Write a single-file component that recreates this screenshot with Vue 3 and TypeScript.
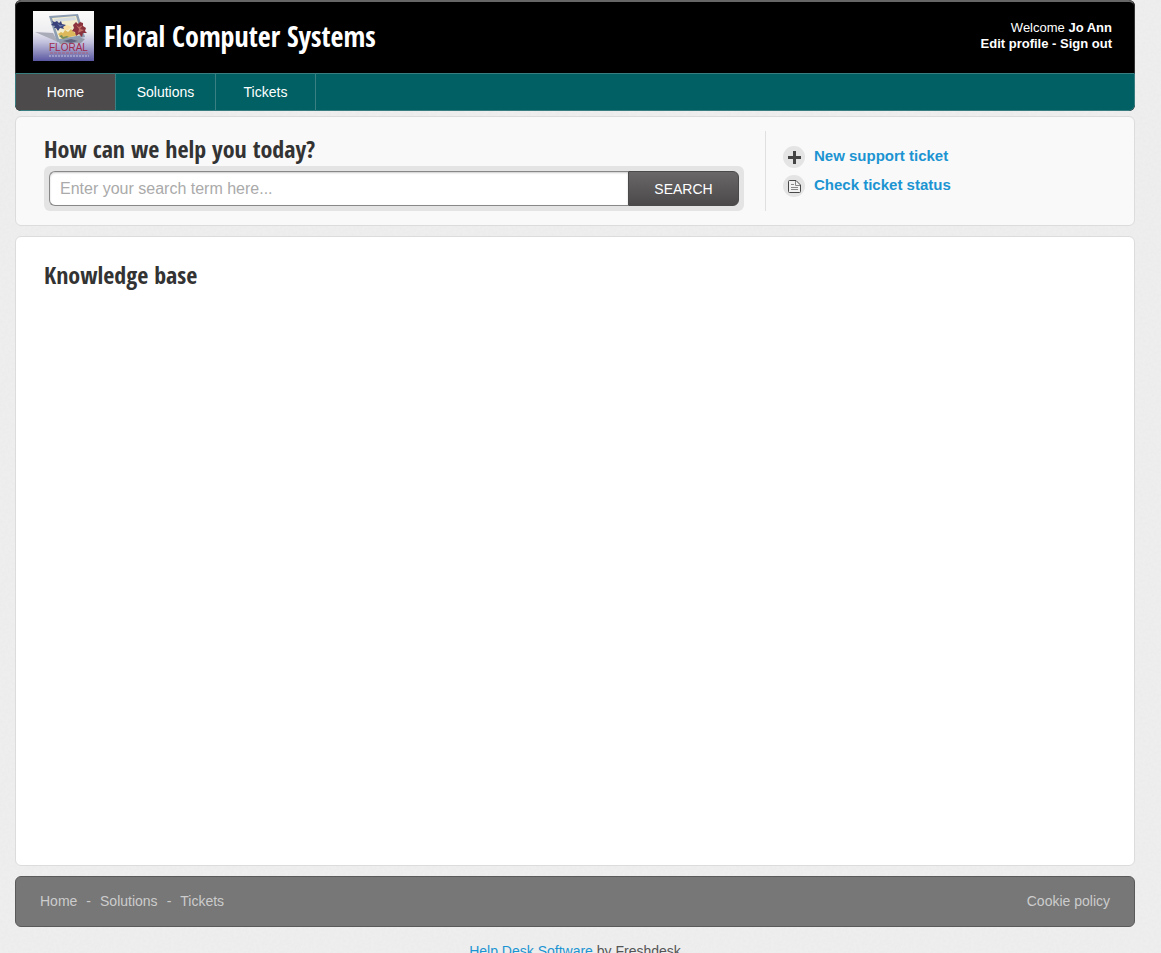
<script setup lang="ts">
import { ref } from 'vue'

interface NavItem {
  label: string
  href: string
}

const navItems: NavItem[] = [
  { label: 'Home', href: '#home' },
  { label: 'Solutions', href: '#solutions' },
  { label: 'Tickets', href: '#tickets' },
]
const active = ref('Home')
const term = ref('')
</script>

<template>
  <div class="page">
    <header class="header">
      <div class="banner">
        <a class="brand" href="#home">
          <svg class="logo" viewBox="0 0 61 50" aria-hidden="true">
            <defs>
              <linearGradient id="sky" x1="0" y1="0" x2="0" y2="1">
                <stop offset="0" stop-color="#fbfbfa" />
                <stop offset="0.4" stop-color="#eeeef1" />
                <stop offset="0.62" stop-color="#c3c2de" />
                <stop offset="0.85" stop-color="#8583b8" />
                <stop offset="1" stop-color="#5a58a2" />
              </linearGradient>
            </defs>
            <rect width="61" height="50" fill="url(#sky)" />
            <path d="M2 21L20 22L25 31Z" fill="#a9abb8" />
            <path d="M25 30L45 26L52 28L48 32L27 33Z" fill="#9299a9" />
            <path d="M16 5L45 3L52 26L24 31Z" fill="#8d9db2" />
            <path d="M19 7L43 5L49 24L26 28Z" fill="#f2edcf" />
            <path d="M21 8L42 6L43 9L22 11Z" fill="#d4dbe1" />
            <path d="M25 23L28 21L30 22L32 19L35 21L38 18L41 21L45 24L29 28Z" fill="#deb95c" />
            <path d="M29 16L34 14L39 16L35 19L31 19Z" fill="#f9dfa2" />
            <path d="M19 10L22 11L24 10L26 12L28 10L29 13L33 14L30 16L31 18L27 17L25 20L23 17L21 17L22 15L18 14L20 12Z" fill="#39427b" />
            <path d="M24 12L27 14L31 14L27 16Z" fill="#6777ae" />
            <path d="M40 14L43 11L45 13L47 11L50 12L50 15L53 17L52 20L54 22L50 22L49 26L46 23L43 25L42 21L39 20L41 17Z" fill="#8b333e" />
            <path d="M43 14L46 16L50 14L47 18L51 19L45 22L46 18Z" fill="#c17068" />
            <path d="M26 25L29 24L30 26L34 25L36 26L30 28Z" fill="#768f5c" />
            <path d="M30 30L38 28L45 30L38 32Z" fill="#5f6480" />
            <text class="logo-name" x="16" y="40">FLORAL</text>
            <path d="M17 42H55" stroke="#a8627f" stroke-dasharray="3 1" />
            <path d="M16 45H56" stroke="#c5c1e0" stroke-dasharray="2 1" />
          </svg>
          <span class="title">Floral Computer Systems</span>
        </a>
        <div class="welcome">
          <div>Welcome <b>Jo Ann</b></div>
          <div class="account">
            <a href="#profile">Edit profile</a> - <a href="#signout">Sign out</a>
          </div>
        </div>
      </div>
      <nav class="nav">
        <a
          v-for="item in navItems"
          :key="item.label"
          :href="item.href"
          :class="{ active: item.label === active }"
          @click="active = item.label"
        >{{ item.label }}</a>
      </nav>
    </header>

    <section class="panel help">
      <div class="search">
        <h2><label for="term">How can we help you today?</label></h2>
        <form class="search-box" @submit.prevent>
          <input id="term" v-model="term" type="text" placeholder="Enter your search term here..." />
          <button type="submit">SEARCH</button>
        </form>
      </div>
      <div class="actions">
        <a href="#new">
          <svg viewBox="0 0 22 22" aria-hidden="true">
            <circle cx="11" cy="11" r="11" fill="#e4e4e4" />
            <path d="M11.5 5V18M5 11.5H18" stroke="#444" stroke-width="3" />
          </svg>
          <span>New support ticket</span>
        </a>
        <a href="#status">
          <svg viewBox="0 0 22 22" aria-hidden="true">
            <circle cx="11" cy="11" r="11" fill="#e4e4e4" />
            <path d="M6.5 5.5H13L17.5 10V16.5Q17.5 17.5 16.5 17.5H6.5Q5.5 17.5 5.5 16.5V6.5Q5.5 5.5 6.5 5.5Z" fill="#f1f1f1" stroke="#484848" />
            <path d="M12.5 6V10.5H17M8 9.5H11M8 12.5H15M8 14.5H15" fill="none" stroke="#888" />
          </svg>
          <span>Check ticket status</span>
        </a>
      </div>
    </section>

    <main class="panel knowledge">
      <h2>Knowledge base</h2>
    </main>

    <footer class="footer">
      <div class="footer-links">
        <template v-for="(item, i) in navItems" :key="item.label">
          <span v-if="i > 0">-</span>
          <a :href="item.href">{{ item.label }}</a>
        </template>
      </div>
      <a href="#cookies">Cookie policy</a>
    </footer>
    <div class="credit"><a href="#helpdesk">Help Desk Software</a> by Freshdesk</div>
  </div>
</template>

<style>
body {
  margin: 0;
  background: #eee;
}
</style>

<style scoped>
* {
  box-sizing: border-box;
}

.page {
  display: flex;
  flex-direction: column;
  height: 100vh;
  overflow: hidden;
  padding: 0 26px 0 15px;
  font-family: "Liberation Sans", Arial, sans-serif;
  font-size: 14px;
  line-height: 16px;
  color: #333;
  background: #eee url("data:image/svg+xml,%3Csvg xmlns='http://www.w3.org/2000/svg' width='200' height='200'%3E%3Cfilter id='n'%3E%3CfeTurbulence type='fractalNoise' baseFrequency='.35' numOctaves='2' stitchTiles='stitch'/%3E%3CfeColorMatrix values='0 0 0 0 .5 0 0 0 0 .5 0 0 0 0 .5 .12 0 0 0 -.045'/%3E%3C/filter%3E%3Crect width='200' height='200' filter='url(%23n)'/%3E%3C/svg%3E");
}

a {
  text-decoration: none;
}

h2 {
  margin: 0;
}

h2,
.title {
  font-family: "Open Sans Condensed", "Liberation Sans Narrow", "Liberation Sans", sans-serif;
  font-weight: 700;
}

h2 {
  font-size: 24px;
  line-height: 32px;
  color: #333;
}

.header {
  flex: none;
  border-radius: 6px;
  overflow: hidden;
  background: #000;
}

.banner {
  display: flex;
  justify-content: space-between;
  height: 73px;
  padding: 8px 22px 0 17px;
  border: 1px solid #333;
  border-top: 2px solid #666;
  border-bottom: 0;
  border-radius: 6px 6px 0 0;
  color: #fff;
}

.brand {
  display: flex;
  gap: 10px;
  color: #fff;
}

.logo {
  width: 61px;
  height: 50px;
  margin-top: 1px;
}

.logo-name {
  font: 10px "Liberation Sans", sans-serif;
  fill: #a02a4c;
}

.title {
  font-size: 28px;
  line-height: 52px;
}

.welcome {
  padding-top: 10px;
  font-size: 13px;
  text-align: right;
}

.account {
  font-weight: 700;
}

.account a {
  color: #fff;
}

.nav {
  display: flex;
  height: 38px;
  border: 1px solid #3a7d80;
  border-radius: 0 0 6px 6px;
  background: #006063;
}

.nav a {
  width: 100px;
  border-right: 1px solid #3a8082;
  line-height: 36px;
  text-align: center;
  color: #fff;
}

.nav .active {
  background: #4c4a4b;
}

.panel {
  border: 1px solid #dcdcdc;
  border-radius: 6px;
}

.help {
  display: flex;
  flex: none;
  height: 110px;
  margin-top: 5px;
  padding: 14px 28px;
  background: #f9f9f9;
}

.search {
  flex: 1;
  max-width: 700px;
  padding-top: 2px;
}

.search-box {
  display: flex;
  height: 45px;
  margin-top: 1px;
  padding: 5px;
  border-radius: 6px;
  background: #e4e4e4;
}

.search-box input {
  flex: 1;
  min-width: 0;
  padding: 0 10px;
  border: 1px solid #888;
  border-right: 0;
  border-radius: 6px 0 0 6px;
  outline: 0;
  font: 16px "Liberation Sans", Arial, sans-serif;
  color: #333;
  background: #fff;
  box-shadow: inset 0 1px 2px #ccc;
}

.search-box input::placeholder {
  color: #aaa;
  opacity: 1;
}

.search-box button {
  width: 111px;
  border: 1px solid #4a4a4a;
  border-radius: 0 6px 6px 0;
  font: 14px "Liberation Sans", Arial, sans-serif;
  color: #fff;
  background: linear-gradient(#696768, #4b494a);
}

.actions {
  display: flex;
  flex-direction: column;
  gap: 7px;
  margin-left: 21px;
  padding: 15px 0 0 17px;
  border-left: 1px solid #e0e0e0;
}

.actions a {
  display: flex;
  gap: 9px;
  font-size: 15px;
  font-weight: 700;
  line-height: 20px;
  color: #1c94d2;
}

.actions svg {
  width: 22px;
  height: 22px;
}

.knowledge {
  flex: 1;
  margin: 10px 0;
  padding: 22px 28px;
  background: #fff;
}

.footer {
  display: flex;
  flex: none;
  align-items: center;
  justify-content: space-between;
  height: 51px;
  padding: 0 24px 2px;
  border: 1px solid #5a5a5a;
  border-radius: 6px;
  color: #ccc;
  background: #777;
}

.footer a {
  color: #ccc;
}

.footer-links {
  display: flex;
  gap: 9px;
}

.credit {
  flex: none;
  height: 26px;
  padding-top: 16px;
  overflow: hidden;
  text-align: center;
  color: #555;
}

.credit a {
  color: #1c94d2;
}
</style>
